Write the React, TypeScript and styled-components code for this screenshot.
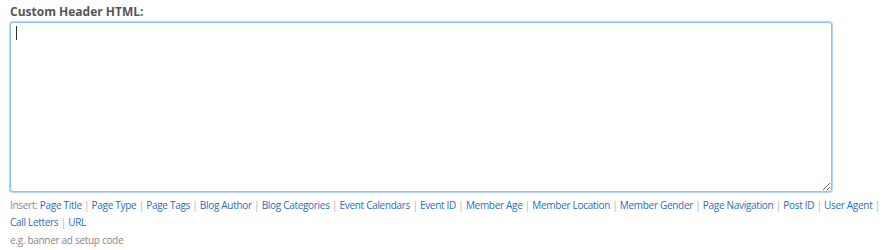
import React from 'react'
import styled, { createGlobalStyle } from 'styled-components'

const GlobalStyle = createGlobalStyle`
    html, body {
        margin: 0;
        padding: 0;
        background: #ffffff;
    }
    body {
        font-family: "Open Sans", "Noto Sans", sans-serif;
    }
`

const Field = styled.div`
    display: flex;
    flex-direction: column;
    padding: 4px 8px 0 10px;
    width: 892px;
    box-sizing: border-box;
`

const Label = styled.label`
    font-size: 12px;
    font-weight: 700;
    color: #555555;
    line-height: 16px;
    margin-bottom: 2px;
`

const EditorWrap = styled.div`
    position: relative;
    width: 822px;
    height: 170px;
`

const TextArea = styled.textarea`
    display: block;
    width: 100%;
    height: 100%;
    box-sizing: border-box;
    border: 1px solid #8ec2f5;
    border-radius: 3px;
    box-shadow: 0 0 1px 1px rgba(120, 180, 245, 0.6);
    outline: none;
    resize: both;
    padding: 4px 6px;
    font-family: "Open Sans", sans-serif;
    font-size: 12px;
    color: #333;
    caret-color: #333;
`

const Caret = styled.span`
    position: absolute;
    left: 6px;
    top: 4px;
    width: 1px;
    height: 14px;
    background: #333333;
    pointer-events: none;
`

const SmallText = styled.div`
    font-size: 10px;
    letter-spacing: -0.3px;
    line-height: 17px;
    color: #888888;
`

const Inserts = styled(SmallText)`
    margin-top: 5px;
`

const Link = styled.a`
    color: #2b6bc4;
    text-decoration: none;
    cursor: pointer;
`

const Sep = styled.span`
    color: #b0b0b0;
`

const Hint = styled(SmallText)`
    margin-top: 1px;
`

const tokens = [
    'Page Title', 'Page Type', 'Page Tags', 'Blog Author', 'Blog Categories',
    'Event Calendars', 'Event ID', 'Member Age', 'Member Location', 'Member Gender',
    'Page Navigation', 'Post ID', 'User Agent', 'Call Letters', 'URL',
]

const App = () => {
    return (
        <>
            <GlobalStyle />
            <Field>
                <Label htmlFor='custom-header'>Custom Header HTML:</Label>
                <EditorWrap>
                    <TextArea id='custom-header' />
                    <Caret />
                </EditorWrap>
                <Inserts>
                    Insert:{' '}
                    {tokens.map((t, i) => (
                        <React.Fragment key={t}>
                            <Link>{t}</Link>
                            {i < tokens.length - 1 && <> <Sep>|</Sep> </>}
                        </React.Fragment>
                    ))}
                </Inserts>
                <Hint>e.g. banner ad setup code</Hint>
            </Field>
        </>
    )
}

export default App
